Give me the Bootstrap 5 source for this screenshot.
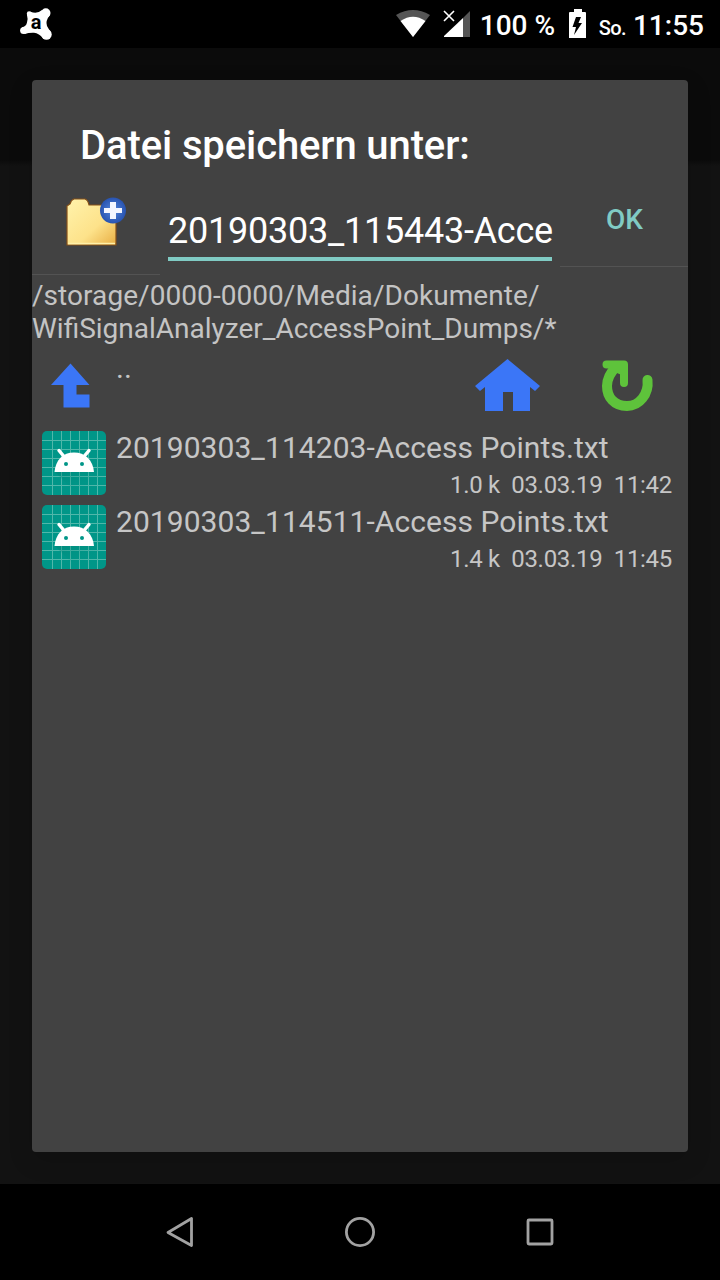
<!DOCTYPE html>
<html lang="de">
<head>
<meta charset="utf-8">
<meta name="viewport" content="width=device-width, initial-scale=1">
<title>Datei speichern unter</title>
<link href="https://cdn.jsdelivr.net/npm/bootstrap@5.3.0/dist/css/bootstrap.min.css" rel="stylesheet">
<style>
body{font-family:Roboto,"Noto Sans",sans-serif;background:#000;width:720px;height:1280px;overflow:hidden}
svg{display:block;flex:none}
.statusbar{height:48px;padding:0 16px 0 20px;color:#fff;font-weight:500;line-height:1}
.status-day{font-size:20px;margin-left:13px;padding-top:8px;letter-spacing:-.6px}
.status-time{font-size:28px;margin-left:7px;padding-top:3px}
.status-level{font-size:28px;margin-left:10px;width:76px;white-space:nowrap;padding-top:3px}
.backdrop-area{height:1136px;padding:32px;background:linear-gradient(#0b0b0b 112px,#121212 118px)}
.dialog{height:1072px;background:#424242;border-radius:4px;box-shadow:0 8px 24px rgba(0,0,0,.15);overflow:hidden}
.dialog-title{font-size:40px;font-weight:500;line-height:47px;color:#fff;padding:42px 48px 0;margin:0;height:90px;white-space:nowrap;letter-spacing:-.11px}
.save-row{height:105px}
.new-folder{width:128px;height:105px;border-bottom:1px solid #535353;padding:25px 0 0 32px}
.name-wrap{width:400px;padding:36px 8px 0}
.name-input{height:55px;border:0;border-bottom:4px solid #80cbc4;border-radius:0;background:none;color:#fff;font-size:36px;line-height:50px;padding:0;white-space:nowrap;letter-spacing:-.24px}
.ok-btn{width:128px;height:97px;border-bottom:1px solid #535353;color:#80cbc4;font-size:28px;font-weight:500;line-height:99px;text-align:center;padding-left:1px}
.folder-path{font-size:28px;line-height:33px;color:#c4c4c4;height:71px;padding-top:4px;white-space:nowrap}
.path-head{letter-spacing:.06px}
.nav-row{height:80px;padding:10px 34px 0 18px;color:#c4c4c4}
.up-name{font-size:30px;line-height:34px;margin-left:24px;margin-top:-5px}
.refresh-icon{margin-left:60px}
.file-row{height:74px;padding:5px 16px 0 10px;color:#c6c6c6}
.file-text{margin-left:10px}
.file-name{font-size:30px;line-height:34px;white-space:nowrap;letter-spacing:.06px}
.file-meta{font-size:24px;line-height:30px;margin-top:5px;white-space:pre;letter-spacing:-.3px}
.softkeys{height:96px;gap:148px}
</style>
</head>
<body>
<svg width="0" height="0" class="position-absolute" aria-hidden="true">
<defs>
<linearGradient id="shade" x1="0" y1="0" x2="1" y2="1"><stop offset="0" stop-color="#007868" stop-opacity=".6"/><stop offset=".7" stop-color="#009688" stop-opacity="0"/></linearGradient>
<symbol id="droid" viewBox="0 0 64 64">
<rect width="64" height="64" rx="5" fill="#009688"/>
<path d="M10.500 0v64M19.500 0v64M28.500 0v64M37.500 0v64M46.500 0v64M55.500 0v64M0 9.500h64M0 18.500h64M0 27.500h64M0 36.500h64M0 45.500h64M0 54.500h64" stroke="#50b7aa" stroke-width="1"/>
<path d="M13 41H52L64 53V59Q64 64 59 64H36Z" fill="url(#shade)" opacity=".6"/>
<path d="M17 19.500l5 6M47 19.500l-5 6" stroke="#fff" stroke-width="3.400" stroke-linecap="round"/>
<path d="M12.500 41C13.500 29 21 21.500 32 21.500S51 29 52 41Z" fill="#fff"/>
<circle cx="24" cy="33" r="2" fill="#009688"/><circle cx="40" cy="33" r="2" fill="#009688"/>
</symbol>
</defs>
</svg>

<header class="statusbar d-flex align-items-center">
<svg width="33" height="32" viewBox="0 0 33 32"><g fill="#fff"><circle cx="9.200" cy="5.700" r="2.400"/><circle cx="25.800" cy="5" r="4.700"/><circle cx="26.500" cy="26.500" r="5.200"/><circle cx="3.700" cy="22.500" r="3.600"/><path d="M10.500 3.700Q17 6.500 22 2L30.200 6.800Q25 13 27 18Q28.500 21 31.300 24.500L23.500 30.800Q19 25 14 24.700Q9 24.500 4.500 26L2 19.300Q6 18.800 7 14.500Q8.200 11 6.900 6.500Z"/></g><text x="16.200" y="21" text-anchor="middle" font-family="Roboto" font-weight="700" font-size="20">a</text></svg>
<svg class="ms-auto" width="34" height="28" viewBox="0 0 34 28"><path d="M0 5Q17-5 34 5L17 27Z" fill="#555"/><path d="M4.500 11Q17 2.500 29.500 11L17 27Z" fill="#fff"/></svg>
<svg style="margin-left:13px" width="27" height="28" viewBox="0 0 27 28"><path d="M27 1V27H20V8Z" fill="#555"/><path d="M20 8V27H1V26Z" fill="#fff"/><path d="M1 1L11 11M11 1L1 11" stroke="#fff" stroke-width="1.600"/></svg>
<span class="status-level">100 %</span>
<svg style="margin-left:13px" width="17" height="30" viewBox="0 0 17 30"><path d="M5 0h8v3h3a1 1 0 0 1 1 1v25H0V4a1 1 0 0 1 1-1h4Z" fill="#fff"/><path d="M7 8h5L9.500 14H13L5 26 7 18H3.500Z" fill="#000"/></svg>
<span class="status-day">So.</span>
<span class="status-time">11:55</span>
</header>

<main class="backdrop-area">
<section class="dialog">
<h1 class="dialog-title">Datei speichern unter:</h1>
<div class="save-row d-flex align-items-start">
<div class="new-folder">
<svg width="64" height="54" viewBox="0 0 64 54">
<defs><linearGradient id="fold" x1="0" y1="0" x2="1" y2="1"><stop stop-color="#fff3ac"/><stop offset=".6" stop-color="#fde28a"/><stop offset="1" stop-color="#e8ae43"/></linearGradient><radialGradient id="orb"><stop stop-color="#5587dd"/><stop offset="1" stop-color="#2853b0"/></radialGradient></defs>
<path d="M3 50V11L6 9Q7 5 10 4H21Q24 5 25 10H52V50Z" fill="url(#fold)" stroke="#865019" stroke-width="1.200"/>
<path d="M4 48.500H51" stroke="#fff0a9" stroke-width="1.500"/>
<circle cx="49" cy="15.500" r="13" fill="url(#orb)"/>
<path d="M46 7h6v6h6v5h-6v6h-6v-6h-6v-5h6Z" fill="#f3f5ff"/>
</svg>
</div>
<div class="name-wrap"><div class="name-input form-control">20190303_115443-Acce</div></div>
<div class="ok-btn">OK</div>
</div>
<div class="folder-path"><span class="path-head">/storage/0000-0000/Media/Dokumente/</span><br>WifiSignalAnalyzer_AccessPoint_Dumps/*</div>
<div class="nav-row d-flex align-items-start">
<svg width="42" height="52" viewBox="0 0 42 52"><path d="M20.500 7.500L39.500 29H26.500V38.500H39.500V51.500H13.500V29H1Z" fill="#3b76f7"/></svg>
<span class="up-name">..</span>
<svg class="ms-auto" width="66" height="56" viewBox="0 0 66 56"><path d="M33.500 3L66 30L61 35L56 31V55H39V36H29V55H11V31L6 35L1 30Z" fill="#3b76f7"/></svg>
<svg class="refresh-icon" width="54" height="56" viewBox="0 0 54 56"><path d="M47.500 24C49 38 39.500 50 27 50C14 50 7 41 7 30C7 23 10 17 16 11" fill="none" stroke="#5ec33b" stroke-width="10" stroke-linecap="round"/><path d="M6.500 8.500H24V27" fill="none" stroke="#5ec33b" stroke-width="8" stroke-linecap="round" stroke-linejoin="round"/><path d="M8 8H24V20L17 17Z" fill="#5ec33b"/></svg>
</div>
<div class="file-row d-flex"><svg width="64" height="64"><use href="#droid"/></svg><div class="file-text flex-fill"><div class="file-name">20190303_114203-Access Points.txt</div><div class="file-meta text-end">1.0 k  03.03.19  11:42</div></div></div>
<div class="file-row d-flex"><svg width="64" height="64"><use href="#droid"/></svg><div class="file-text flex-fill"><div class="file-name">20190303_114511-Access Points.txt</div><div class="file-meta text-end">1.4 k  03.03.19  11:45</div></div></div>
</section>
</main>

<nav class="softkeys d-flex justify-content-center align-items-center">
<svg width="32" height="32" viewBox="0 0 32 32"><path d="M27.500 2.500V29.500L4 16.500Z" fill="none" stroke="#a2a2a2" stroke-width="2.800" stroke-linejoin="round"/></svg>
<svg width="32" height="32" viewBox="0 0 32 32"><circle cx="16" cy="16" r="13.600" fill="none" stroke="#a2a2a2" stroke-width="2.800"/></svg>
<svg width="32" height="32" viewBox="0 0 32 32"><rect x="4" y="4" width="24" height="24" rx="1" fill="none" stroke="#a2a2a2" stroke-width="2.800"/></svg>
</nav>
<script src="https://cdn.jsdelivr.net/npm/bootstrap@5.3.0/dist/js/bootstrap.bundle.min.js"></script>
</body>
</html>
